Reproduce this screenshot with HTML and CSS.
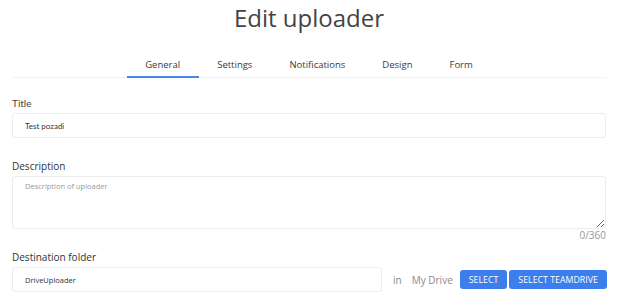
FILE: index.html
```html
<!DOCTYPE html>
<html lang="en">
<head>
  <meta charset="UTF-8" />
  <meta name="viewport" content="width=device-width, initial-scale=1.0"/>
  <title>Edit uploader</title>
  <link rel="stylesheet" href="styles.css">
</head>
<body>
  <main class="page">
    <h1 class="title">Edit uploader</h1>

    <nav class="tabs">
      <a class="tab active">General</a>
      <a class="tab">Settings</a>
      <a class="tab">Notifications</a>
      <a class="tab">Design</a>
      <a class="tab">Form</a>
    </nav>

    <div class="field field-title">
      <label class="label label-lato">Title</label>
      <input class="input input-lato" type="text" value="Test pozadi">
    </div>

    <div class="field field-desc">
      <label class="label">Description</label>
      <textarea class="input area" placeholder="Description of uploader"></textarea>
      <div class="counter">0/360</div>
    </div>

    <div class="field field-dest">
      <label class="label">Destination folder</label>
      <div class="dest-row">
        <input class="input dest-input" type="text" value="DriveUploader">
        <span class="in">in</span>
        <span class="drive">My Drive</span>
        <button class="btn btn-first">SELECT</button>
        <button class="btn">SELECT TEAMDRIVE</button>
      </div>
    </div>
  </main>
</body>
</html>
```

FILE: styles.css
```css
* {
  margin: 0;
  box-sizing: border-box;
}

body {
  background: #ffffff;
  font-family: "Open Sans", sans-serif;
  color: #333;
}

.page {
  padding: 0 18px 0 12px;
}

.title {
  margin-top: 3px;
  font-size: 24px;
  line-height: 30px;
  font-weight: 400;
  text-align: center;
  color: #444;
}

.tabs {
  margin-top: 24px;
  display: flex;
  justify-content: center;
  border-bottom: 1px solid #f2f2f2;
}

.tab {
  padding: 0 18.5px 3px;
  font-size: 9.5px;
  line-height: 16px;
  color: #3a3a3a;
  border-bottom: 2px solid transparent;
  margin-bottom: -1px;
  white-space: nowrap;
}

.tab.active {
  border-bottom-color: #4a86e8;
}

.label {
  display: block;
  font-size: 10px;
  line-height: 14px;
  color: #333;
  margin-bottom: 3px;
}

.label-lato {
  font-family: "Lato", sans-serif;
  color: #444;
}

.input {
  display: block;
  width: 100%;
  height: 25px;
  padding: 0 12px;
  border: 1px solid #ececec;
  border-radius: 3px;
  font-family: "Open Sans", sans-serif;
  font-size: 7.5px;
  color: #333;
  background: #fff;
  outline: none;
}

.input-lato {
  font-family: "Lato", sans-serif;
  font-size: 8px;
}

.field-title {
  margin-top: 18px;
}

.field-desc {
  margin-top: 21px;
}

.area {
  height: 53px;
  padding: 4px 12px;
  line-height: 10px;
  resize: vertical;
}

.area::placeholder {
  color: #9a9a9a;
}

.counter {
  text-align: right;
  font-size: 10px;
  line-height: 12px;
  color: #999;
}

.field-dest {
  margin-top: 9px;
}

.dest-row {
  display: flex;
  align-items: center;
}

.dest-input {
  width: 370px;
  flex: none;
}

.in, .drive {
  font-size: 10px;
  color: #8a8a8a;
  white-space: nowrap;
}

.in {
  margin-left: 11px;
}

.drive {
  margin-left: 10px;
}

.btn {
  flex: none;
  height: 19px;
  padding: 0 9px;
  margin-left: 2px;
  border: 0;
  border-radius: 3px;
  background: #3b7eec;
  color: #fff;
  font-family: "Open Sans", sans-serif;
  font-size: 8.8px;
  font-weight: 500;
  white-space: nowrap;
}

.btn-first {
  margin-left: 7px;
}
```
